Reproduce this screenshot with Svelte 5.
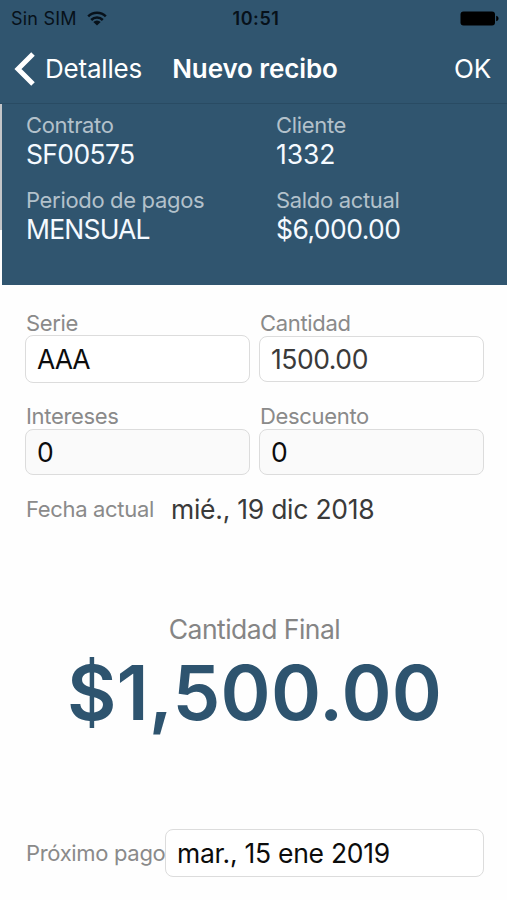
<script lang="ts">
  interface Detail {
    label: string;
    value: string;
    spacing: number;
  }

  const details: Detail[] = [
    { label: 'Contrato', value: 'SF00575', spacing: -0.65 },
    { label: 'Cliente', value: '1332', spacing: -0.1 },
    { label: 'Periodo de pagos', value: 'MENSUAL', spacing: -0.8 },
    { label: 'Saldo actual', value: '$6,000.00', spacing: -0.55 },
  ];

  let serie = $state('AAA');
  let cantidad = $state('1500.00');
  let intereses = $state('0');
  let descuento = $state('0');
  let proximoPago = $state('mar., 15 ene 2019');

  const total = $derived(
    '$' +
      (Number(cantidad) + Number(intereses) - Number(descuento)).toLocaleString('en-US', {
        minimumFractionDigits: 2,
      })
  );
</script>

<div class="screen">
  <header>
    <div class="status">
      <div class="carrier">
        <span>Sin SIM</span>
        <svg class="wifi" viewBox="0 0 20 15" width="20" height="15" aria-hidden="true">
          <g fill="none" stroke="currentColor" stroke-width="2.5">
            <path d="M1.2 5.4a12.6 12.6 0 0 1 17.6 0" />
            <path d="M4.2 9a8.200 8.200 0 0 1 11.600 0" />
          </g>
          <path d="M10 14.500 6.300 11a5.200 5.200 0 0 1 7.400 0z" fill="currentColor" />
        </svg>
      </div>
      <span class="time">10:51</span>
      <svg class="battery" viewBox="0 0 39 15" width="39" height="15" aria-hidden="true">
        <rect x="0.5" y="0.5" width="34.5" height="14" rx="3" />
        <path d="M36.2 4.8c1.6.4 2.3 1.4 2.3 2.7s-.7 2.3-2.3 2.7z" />
      </svg>
    </div>
    <nav>
      <button class="back">
        <svg viewBox="0 0 21 34" width="21" height="34" aria-hidden="true">
          <path d="M19 2 4 17l15 15" fill="none" stroke="currentColor" stroke-width="5" />
        </svg>
        <span>Detalles</span>
      </button>
      <h1>Nuevo recibo</h1>
      <button class="ok">OK</button>
    </nav>
  </header>

  <section class="summary">
    {#each details as d}
      <div class="detail">
        <span class="label">{d.label}</span>
        <span class="value" style="letter-spacing: {d.spacing}px">{d.value}</span>
      </div>
    {/each}
  </section>

  <main>
    <div class="fields">
      <label>
        <span class="label">Serie</span>
        <input class="tall serie" bind:value={serie} />
      </label>
      <label>
        <span class="label">Cantidad</span>
        <input class="soft" bind:value={cantidad} />
      </label>
      <label>
        <span class="label">Intereses</span>
        <input class="filled" bind:value={intereses} />
      </label>
      <label>
        <span class="label">Descuento</span>
        <input class="filled" bind:value={descuento} />
      </label>
    </div>

    <div class="today">
      <span class="label">Fecha actual</span>
      <span class="date">mié., 19 dic 2018</span>
    </div>

    <div class="final">
      <span class="caption">Cantidad Final</span>
      <strong>{total}</strong>
    </div>

    <label class="next">
      <span class="label">Próximo pago</span>
      <input class="tall" bind:value={proximoPago} />
    </label>
  </main>
</div>

<style>
  :global(body) {
    margin: 0;
    background: #fff;
  }
  .screen {
    display: flex;
    flex-direction: column;
    width: 507px;
    height: 900px;
    overflow: hidden;
    background: #fefefe;
    font-family: Inter, 'Liberation Sans', sans-serif;
  }
  header {
    height: 104px;
    background: #30556f;
    border-bottom: 1px solid #294b63;
    box-sizing: border-box;
  }
  .status {
    display: grid;
    grid-template-columns: 1fr auto 1fr;
    align-items: center;
    height: 37px;
    padding: 0 8px 0 11px;
    color: #07111a;
    font-size: 18px;
  }
  .carrier {
    display: flex;
    align-items: center;
    gap: 10px;
    letter-spacing: 0.2px;
  }
  .time {
    padding-left: 2px;
    font-weight: 600;
    letter-spacing: 0.6px;
  }
  .battery {
    justify-self: end;
    fill: #000;
  }
  nav {
    display: grid;
    grid-template-columns: 1fr auto 1fr;
    align-items: center;
    height: 63px;
    padding: 0 16px 0 14px;
    color: #fff;
  }
  button {
    display: flex;
    align-items: center;
    padding: 0;
    border: 0;
    background: none;
    color: inherit;
    font: inherit;
    font-size: 26px;
    letter-spacing: -0.2px;
  }
  .back {
    gap: 10px;
  }
  .ok {
    justify-self: end;
  }
  h1 {
    margin: 0;
    padding-left: 5px;
    font-size: 26px;
    font-weight: 600;
    letter-spacing: -0.1px;
  }
  .summary {
    display: grid;
    grid-template-columns: 250px 1fr;
    align-content: start;
    gap: 16px 0;
    height: 181px;
    padding: 8px 0 0 24px;
    border-style: solid;
    border-width: 0 0 0 2px;
    border-image: linear-gradient(#c4c6c9 126px, #fefefe 126px) 1;
    box-sizing: border-box;
    background: #30556f;
  }
  .detail {
    display: flex;
    flex-direction: column;
  }
  .label {
    font-size: 22px;
    line-height: 26px;
    letter-spacing: -0.33px;
    color: #8a8a8a;
    white-space: nowrap;
  }
  .summary .label {
    color: #b3c1cb;
  }
  .value {
    font-size: 26.5px;
    line-height: 33px;
    color: #f5faff;
  }
  main {
    display: flex;
    flex-direction: column;
    flex: 1;
    padding: 25px 23px 0 25px;
  }
  .fields {
    display: grid;
    grid-template-columns: 1fr 1fr;
    gap: 0 9px;
    grid-auto-rows: 93px;
  }
  .fields label {
    display: flex;
    flex-direction: column;
  }
  .fields .label {
    padding-left: 1px;
  }
  input {
    width: 100%;
    height: 46px;
    padding: 0 11px 1px;
    border: 1px solid #dcdcdc;
    border-radius: 8px;
    box-sizing: border-box;
    background: #fff;
    color: #0c0c0c;
    font: inherit;
    font-size: 26.5px;
    letter-spacing: -0.27px;
    outline: none;
  }
  input.tall {
    height: 48px;
  }
  input.serie {
    margin-top: -1px;
    letter-spacing: -1px;
  }
  input.soft {
    color: #3a3a3a;
    letter-spacing: -0.45px;
  }
  input.filled {
    background: #fafafa;
  }
  .today {
    display: flex;
    align-items: center;
    height: 34px;
    margin-top: -4px;
    padding-left: 1px;
    gap: 17px;
  }
  .date {
    font-size: 26.5px;
    letter-spacing: -0.25px;
    color: #3a3a3a;
  }
  .final {
    display: flex;
    flex-direction: column;
    align-items: center;
    margin-top: 86px;
  }
  .caption {
    font-size: 26.5px;
    line-height: 34px;
    letter-spacing: -0.52px;
    color: #858585;
  }
  strong {
    font-size: 76px;
    line-height: 92px;
    font-weight: 600;
    letter-spacing: 0.2px;
    color: #2e546f;
  }
  .next {
    display: grid;
    grid-template-columns: 139px 1fr;
    align-items: center;
    margin-top: 91px;
    padding-left: 1px;
  }
</style>
